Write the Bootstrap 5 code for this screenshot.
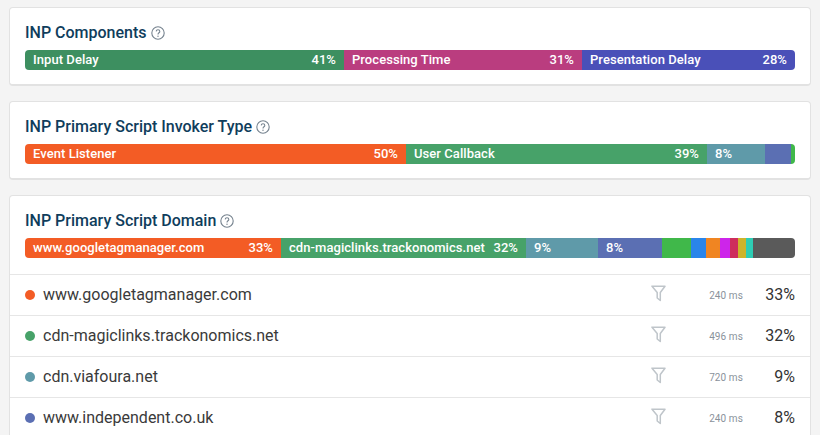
<!DOCTYPE html>
<html lang="en">
<head>
<meta charset="utf-8">
<title>INP</title>
<link href="https://cdn.jsdelivr.net/npm/bootstrap@5.3.0/dist/css/bootstrap.min.css" rel="stylesheet">
<style>
html,body{height:435px;overflow:hidden}
body{background:#f4f4f4;font-family:Roboto,"Liberation Sans",sans-serif;color:#333;padding:7px 9px 0 9px}
.pane{background:#fff;border:1px solid #e2e2e2;border-bottom-width:2px;border-radius:4px;margin-bottom:15px;padding:15px 15px 14px 15px;height:79px}
.pane-open{height:auto;padding:15px 0 0 0;margin:0;border-bottom:0}
.pane-head{font-size:16px;font-weight:500;line-height:20px;color:#0f3d5c;margin-bottom:7px}
.pane-head-inset{padding:0 15px}
.pane-head svg{vertical-align:-2px}
.stack{height:20px;border-radius:4px;overflow:hidden;color:#fff;font-size:13px;font-weight:500;line-height:20px;letter-spacing:.06px}
.stack-inset{margin:0 15px 16px 15px}
.seg{padding:0 8px;white-space:nowrap;overflow:hidden;flex:none}
.seg-bare{padding:0}
.rowline{height:41px;border-top:1px solid #e6e6e6;padding:0 15px;font-size:16px;line-height:20px}
.dot{width:10px;height:10px;border-radius:50%;margin-right:8px;flex:none}
.name{color:#3a3a3a}
.ms{font-size:10px;color:#8a929b;width:50px;text-align:right;margin-left:27px;letter-spacing:.1px;padding-top:2px}
.pct{width:52px;text-align:right;color:#333}
.funnel{flex:none;margin-top:-3px}
</style>
</head>
<body>
<div class="pane">
  <div class="pane-head">INP Components
    <svg width="14" height="14" viewBox="0 0 14 14" fill="none"><circle cx="7" cy="7" r="6.2" stroke="#75828e" stroke-width="1.1"/><path d="M5.2 5.4C5.3 4.4 6 3.8 7 3.8c1.1 0 1.8.7 1.8 1.6 0 1.4-1.8 1.4-1.8 3" stroke="#75828e" stroke-width="1.1"/><circle cx="7" cy="10.2" r=".7" fill="#75828e"/></svg>
  </div>
  <div class="stack d-flex">
    <div class="seg d-flex justify-content-between" style="width:319px;background:#3d8f60"><span>Input Delay</span><span>41%</span></div>
    <div class="seg d-flex justify-content-between" style="width:238px;background:#ba3d7f"><span>Processing Time</span><span>31%</span></div>
    <div class="seg d-flex justify-content-between" style="width:213px;background:#4a50b8"><span>Presentation Delay</span><span>28%</span></div>
  </div>
</div>
<div class="pane">
  <div class="pane-head">INP Primary Script Invoker Type
    <svg width="14" height="14" viewBox="0 0 14 14" fill="none"><circle cx="7" cy="7" r="6.2" stroke="#75828e" stroke-width="1.1"/><path d="M5.2 5.4C5.3 4.4 6 3.8 7 3.8c1.1 0 1.8.7 1.8 1.6 0 1.4-1.8 1.4-1.8 3" stroke="#75828e" stroke-width="1.1"/><circle cx="7" cy="10.2" r=".7" fill="#75828e"/></svg>
  </div>
  <div class="stack d-flex">
    <div class="seg d-flex justify-content-between" style="width:381px;background:#f35c25"><span>Event Listener</span><span>50%</span></div>
    <div class="seg d-flex justify-content-between" style="width:301px;background:#47a269"><span>User Callback</span><span>39%</span></div>
    <div class="seg" style="width:58px;background:#5f9aa9"><span>8%</span></div>
    <div class="seg seg-bare" style="width:26px;background:#5b6fb3"></div>
    <div class="seg seg-bare" style="width:4px;background:#40b84a"></div>
  </div>
</div>
<div class="pane pane-open">
  <div class="pane-head pane-head-inset">INP Primary Script Domain
    <svg width="14" height="14" viewBox="0 0 14 14" fill="none"><circle cx="7" cy="7" r="6.2" stroke="#75828e" stroke-width="1.1"/><path d="M5.2 5.4C5.3 4.4 6 3.8 7 3.8c1.1 0 1.8.7 1.8 1.6 0 1.4-1.8 1.4-1.8 3" stroke="#75828e" stroke-width="1.1"/><circle cx="7" cy="10.2" r=".7" fill="#75828e"/></svg>
  </div>
  <div class="stack stack-inset d-flex">
    <div class="seg d-flex justify-content-between" style="width:256px;background:#f35c25"><span>www.googletagmanager.com</span><span>33%</span></div>
    <div class="seg d-flex justify-content-between" style="width:245px;background:#47a269"><span>cdn-magiclinks.trackonomics.net</span><span>32%</span></div>
    <div class="seg" style="width:72px;background:#5f9aa9"><span>9%</span></div>
    <div class="seg" style="width:64px;background:#5b6fb3"><span>8%</span></div>
    <div class="seg seg-bare" style="width:29px;background:#40b84a"></div>
    <div class="seg seg-bare" style="width:15px;background:#2a85ea"></div>
    <div class="seg seg-bare" style="width:14px;background:#f08522"></div>
    <div class="seg seg-bare" style="width:10px;background:#cd25ea"></div>
    <div class="seg seg-bare" style="width:8px;background:#ce2e5c"></div>
    <div class="seg seg-bare" style="width:8px;background:#cdb42a"></div>
    <div class="seg seg-bare" style="width:7px;background:#2ecdb4"></div>
    <div class="seg seg-bare" style="width:42px;background:#5a5a5a"></div>
  </div>
  <div class="rowline d-flex align-items-center">
    <span class="dot" style="background:#f35c25"></span><span class="name flex-grow-1">www.googletagmanager.com</span>
    <svg class="funnel" width="15" height="17" viewBox="0 0 15 17" fill="none"><path d="M1 1.2h13L9.3 7.5v8L6.2 13V7.5z" stroke="#bfc5ca" stroke-width="1.5" stroke-linejoin="round"/></svg>
    <span class="ms">240 ms</span><span class="pct">33%</span>
  </div>
  <div class="rowline d-flex align-items-center">
    <span class="dot" style="background:#47a269"></span><span class="name flex-grow-1">cdn-magiclinks.trackonomics.net</span>
    <svg class="funnel" width="15" height="17" viewBox="0 0 15 17" fill="none"><path d="M1 1.2h13L9.3 7.5v8L6.2 13V7.5z" stroke="#bfc5ca" stroke-width="1.5" stroke-linejoin="round"/></svg>
    <span class="ms">496 ms</span><span class="pct">32%</span>
  </div>
  <div class="rowline d-flex align-items-center">
    <span class="dot" style="background:#5f9aa9"></span><span class="name flex-grow-1">cdn.viafoura.net</span>
    <svg class="funnel" width="15" height="17" viewBox="0 0 15 17" fill="none"><path d="M1 1.2h13L9.3 7.5v8L6.2 13V7.5z" stroke="#bfc5ca" stroke-width="1.5" stroke-linejoin="round"/></svg>
    <span class="ms">720 ms</span><span class="pct">9%</span>
  </div>
  <div class="rowline d-flex align-items-center">
    <span class="dot" style="background:#5b6fb3"></span><span class="name flex-grow-1">www.independent.co.uk</span>
    <svg class="funnel" width="15" height="17" viewBox="0 0 15 17" fill="none"><path d="M1 1.2h13L9.3 7.5v8L6.2 13V7.5z" stroke="#bfc5ca" stroke-width="1.5" stroke-linejoin="round"/></svg>
    <span class="ms">240 ms</span><span class="pct">8%</span>
  </div>
</div>
<script src="https://cdn.jsdelivr.net/npm/bootstrap@5.3.0/dist/js/bootstrap.bundle.min.js"></script>
</body>
</html>
